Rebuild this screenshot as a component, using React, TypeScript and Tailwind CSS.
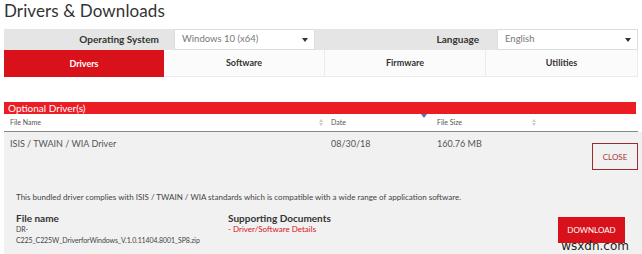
import { useState } from "react";

const tabs = ["Drivers", "Software", "Firmware", "Utilities"];

function Caret() {
  return <span className="ml-auto mr-[6px] w-0 h-0 border-l-[3px] border-r-[3px] border-t-[4px] border-l-transparent border-r-transparent border-t-[#333]" />;
}

function SortIcon({ active }: { active?: boolean }) {
  if (active) {
    return <span className="w-0 h-0 border-l-[3px] border-r-[3px] border-t-[4px] border-l-transparent border-r-transparent border-t-[#5b6fb5]" />;
  }
  return (
    <span className="flex flex-col gap-[1px] items-center">
      <span className="w-0 h-0 border-l-[2px] border-r-[2px] border-b-[3px] border-l-transparent border-r-transparent border-b-[#ccc]" />
      <span className="w-0 h-0 border-l-[2px] border-r-[2px] border-t-[3px] border-l-transparent border-r-transparent border-t-[#ccc]" />
    </span>
  );
}

export default function App() {
  const [tab, setTab] = useState("Drivers");
  return (
    <div className="w-[642px] h-[254px] bg-white overflow-hidden px-[4px] font-['Lato',sans-serif] relative">
      <h1 className="text-[17px] leading-[20px] text-[#333] pt-[1px] h-[29px] tracking-[0.1px]">Drivers &amp; Downloads</h1>

      <div className="h-[21px] bg-[#e5e5e5] grid grid-cols-[170px_141px_1fr_141px] items-stretch">
        <div className="flex items-center justify-end pr-[15px] text-[10px] font-bold text-[#333]">Operating System</div>
        <div className="bg-white border border-[#ddd] flex items-center pl-[7px] text-[9.5px] text-[#777]">
          Windows 10 (x64)
          <Caret />
        </div>
        <div className="flex items-center justify-end pr-[18px] text-[10px] font-bold text-[#333]">Language</div>
        <div className="bg-white border border-[#ddd] flex items-center pl-[7px] text-[9.5px] text-[#777]">
          English
          <Caret />
        </div>
      </div>

      <div className="h-[27px] grid grid-cols-[160px_161px_161px_1fr]">
        {tabs.map((t) => (
          <button
            key={t}
            onClick={() => setTab(t)}
            className={
              t === tab
                ? "bg-[#d8111b] text-white text-[9px] font-bold"
                : "bg-[#fbfbfb] text-[#333] text-[9px] font-bold border-r border-b border-[#ebebeb]"
            }
          >
            {t}
          </button>
        ))}
      </div>

      <div className="mt-[25px] h-[12px] mr-[2px] bg-[#ec1c24] text-white text-[10px] leading-[12px] pl-[4px]">Optional Driver(s)</div>

      <div className="h-[18px] grid grid-cols-[321px_106px_109px_1fr] border-b border-[#888] text-[7px] text-[#555] items-center">
        <div className="flex items-center pl-[6px] pr-[2px]">File Name<span className="ml-auto"><SortIcon /></span></div>
        <div className="flex items-center pl-[6px] pr-[4px]">Date<span className="ml-auto"><SortIcon active /></span></div>
        <div className="flex items-center pl-[6px] pr-[4px]">File Size<span className="ml-auto"><SortIcon /></span></div>
        <div />
      </div>

      <div className="bg-[#f1f1f1] h-[130px] -mr-[4px] pr-[4px]">
        <div className="grid grid-cols-[321px_106px_109px_1fr] text-[9px] text-[#555] h-[60px]">
          <div className="pl-[6px] pt-[5px]">ISIS / TWAIN / WIA Driver</div>
          <div className="pl-[6px] pt-[5px]">08/30/18</div>
          <div className="pl-[6px] pt-[5px]">160.76 MB</div>
          <div className="flex justify-end pt-[11px]">
            <button className="w-[46px] h-[27px] border border-[#9e2a2f] text-[#a3353a] text-[8px]">CLOSE</button>
          </div>
        </div>
        <p className="pl-[12px] text-[8px] text-[#444] -mt-[1px]">This bundled driver complies with ISIS / TWAIN / WIA standards which is compatible with a wide range of application software.</p>
        <div className="flex pl-[12px] mt-[9px]">
          <div className="w-[212px]">
            <div className="text-[10px] font-bold text-[#333] leading-[12px]">File name</div>
            <div className="text-[7px] tracking-[-0.1px] text-[#444] leading-[11px]">DR-<br />C225_C225W_DriverforWindows_V.1.0.11404.8001_SP8.zip</div>
          </div>
          <div>
            <div className="text-[10px] font-bold text-[#333] leading-[12px]">Supporting Documents</div>
            <div className="text-[8px] text-[#d8111b] leading-[11px]">- Driver/Software Details</div>
          </div>
          <button className="ml-auto mr-[13px] mt-[5px] w-[67px] h-[26px] bg-[#d8111b] text-white text-[8px]">DOWNLOAD</button>
        </div>
      </div>

      <span className="absolute right-[13px] bottom-[1px] text-[12px] leading-[14px] text-[#222] font-['DejaVu_Sans',sans-serif]">wsxdn.com</span>
    </div>
  );
}
